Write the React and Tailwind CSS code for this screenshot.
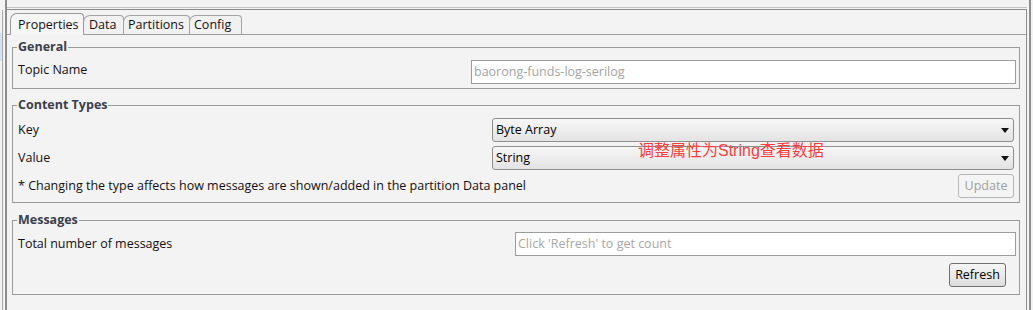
import React from "react";

function Tab({ label, sel, w, pl }) {
  return (
    <div
      className={
        sel
          ? "relative z-10 h-[22px] -mb-px bg-[#f6f6f6] border border-b-0 border-[#9a9a9a] rounded-tl-[7px] rounded-tr-[4px] shrink-0"
          : "h-[19px] bg-[#f1f1f1] border border-b-0 border-[#a3a3a3] rounded-tl-[7px] rounded-tr-[4px] -ml-px shrink-0"
      }
      style={{ width: w }}
    >
      <div className={sel ? "pt-[3px] leading-[16px]" : "pt-px leading-[16px]"} style={{ paddingLeft: pl }}>
        {label}
      </div>
    </div>
  );
}

function Combo({ value }) {
  return (
    <div className="w-[522px] h-[24px] border border-[#8f8f8f] rounded-[3px] bg-gradient-to-b from-[#f7f7f7] to-[#e3e3e3] flex items-center justify-between pl-[3px] pr-[4px] shrink-0">
      <span className="leading-[16px] text-black">{value}</span>
      <svg width="8" height="5" viewBox="0 0 8 5">
        <polygon points="0,0 8,0 4,5" fill="#111" />
      </svg>
    </div>
  );
}

function Legend({ children }) {
  return (
    <legend className="px-px -ml-px font-bold leading-[16px] text-[#3a404c]">{children}</legend>
  );
}

export default function App() {
  return (
    <div className="relative w-[1033px] h-[310px] bg-[#f3f3f3] flex overflow-hidden text-[12.5px] leading-[16px] text-[#141014] font-['Open_Sans',sans-serif]">
      {/* left window chrome */}
      <div className="w-[7px] h-full flex shrink-0">
        <div className="w-[2px] flex flex-col">
          <div className="h-[33px]" />
          <div className="h-[28px] bg-[#d3e3f4]" />
        </div>
        <div className="w-px flex flex-col">
          <div className="h-[10px]" />
          <div className="flex-1 bg-[#a9a9a9]" />
        </div>
        <div className="w-[2px]" />
        <div className="w-[2px] bg-[#8e8e8e]" />
      </div>

      {/* main */}
      <div className="w-[1020px] h-full flex flex-col shrink-0">
        <div className="h-[7px]" />
        <div className="h-px bg-[#c3c3c3]" />
        <div className="h-px" />
        <div className="flex-1 border-t border-r border-[#8c8c8c] flex flex-col">
          {/* tabs */}
          <div className="h-[24px] flex items-end pl-[3px]">
            <Tab label="Properties" sel w={74} pl={7} />
            <Tab label="Data" w={41} pl={5} />
            <Tab label="Partitions" w={67} pl={4} />
            <Tab label="Config" w={53} pl={4} />
          </div>

          {/* panel */}
          <div className="flex-1 border-t border-[#9c9c9c] pl-[5px] pr-[6px]">
            {/* General */}
            <fieldset className="mt-[4px] border border-[#9a9a9a] pl-[5px] pr-[3px] pt-[5px] pb-[4px]">
              <Legend>General</Legend>
              <div className="flex items-start justify-between">
                <span className="pt-[2px]">Topic Name</span>
                <div className="w-[545px] h-[24px] border border-[#9c9c9c] bg-white flex items-center pl-[2px] text-[#a3a3a3] shrink-0">
                  baorong-funds-log-serilog
                </div>
              </div>
            </fieldset>

            {/* Content Types */}
            <fieldset className="mt-[8px] border border-[#9a9a9a] pl-[5px] pr-[5px] pt-[5px] pb-[4px]">
              <Legend>Content Types</Legend>
              <div className="flex flex-col gap-[4px]">
                <div className="flex items-center justify-between">
                  <span>Key</span>
                  <Combo value="Byte Array" />
                </div>
                <div className="flex items-center justify-between">
                  <span>Value</span>
                  <Combo value="String" />
                </div>
                <div className="flex items-center justify-between">
                  <span>* Changing the type affects how messages are shown/added in the partition Data panel</span>
                  <div className="w-[56px] h-[24px] border border-[#b4b8bb] rounded-[3px] bg-[#f4f4f4] flex items-center justify-center text-[#a0a0a0] shrink-0">
                    Update
                  </div>
                </div>
              </div>
            </fieldset>

            {/* Messages */}
            <fieldset className="mt-[9px] border border-[#9a9a9a] pl-[5px] pr-[3px] pt-[4px] pb-[7px]">
              <Legend>Messages</Legend>
              <div className="flex flex-col gap-[7px]">
                <div className="flex items-center justify-between">
                  <span>Total number of messages</span>
                  <div className="w-[501px] h-[24px] border border-[#9c9c9c] bg-white flex items-center pl-[2px] text-[#a8a8a8] shrink-0">
                    Click 'Refresh' to get count
                  </div>
                </div>
                <div className="flex justify-end pr-[10px]">
                  <div className="w-[57px] h-[24px] border border-[#707070] rounded-[3px] bg-gradient-to-b from-[#f6f6f6] to-[#dddddd] flex items-center justify-center text-black">
                    Refresh
                  </div>
                </div>
              </div>
            </fieldset>
          </div>
        </div>
      </div>

      {/* right window chrome */}
      <div className="w-[6px] h-full flex shrink-0">
        <div className="w-[2px]" />
        <div className="w-[2px] bg-[#8e8e8e]" />
        <div className="w-[2px]" />
      </div>

      {/* red annotation */}
      <div className="absolute left-[638px] top-[141px] text-[16px] leading-[20px] text-[#ff3c3c] whitespace-nowrap font-['Liberation_Sans','Noto_Sans_CJK_SC',sans-serif]">
        调整属性为String查看数据
      </div>
    </div>
  );
}
